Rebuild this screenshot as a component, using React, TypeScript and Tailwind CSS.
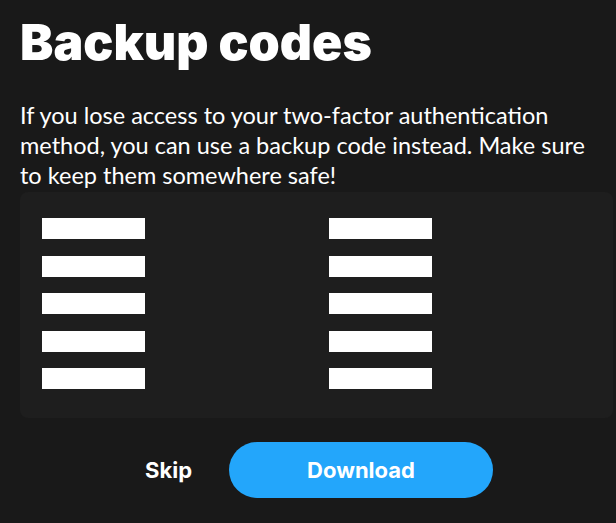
import React from 'react';

const codeRows = [0, 1, 2, 3, 4];

const CodeBlock: React.FC = () => (
  <div className="h-[21px] w-[103px] bg-white" />
);

export default function App() {
  return (
    <div className="min-h-[523px] w-[616px] bg-[#191919] text-white" style={{ fontFamily: 'Lato, sans-serif' }}>
      <div className="px-5 pt-[14px]">
        <h1 className="text-[50px] font-black leading-[56px]" style={{ fontFamily: 'Inter, sans-serif' }}>
          Backup codes
        </h1>
        <p className="mt-[30px] text-[23.5px] leading-[30px]">
          If you lose access to your two-factor authentication method, you can use a backup code instead. Make sure to keep them somewhere safe!
        </p>
      </div>

      <div className="ml-5 mr-[3px] mt-[2px] h-[226px] rounded-lg bg-[#1e1e1e] pl-[22px] pt-[26px]">
        <div className="grid grid-cols-[287px_1fr] gap-y-[16.5px]">
          {codeRows.map((r) => (
            <React.Fragment key={r}>
              <CodeBlock />
              <CodeBlock />
            </React.Fragment>
          ))}
        </div>
      </div>

      <div className="mt-6 flex items-center justify-center gap-[37px] pl-[22px]">
        <button className="text-[22px] font-bold" style={{ fontFamily: 'Inter, sans-serif' }}>Skip</button>
        <button className="h-14 w-[264px] rounded-full bg-[#23a6fb] text-[22px] font-bold" style={{ fontFamily: 'Inter, sans-serif' }}>
          Download
        </button>
      </div>
    </div>
  );
}
